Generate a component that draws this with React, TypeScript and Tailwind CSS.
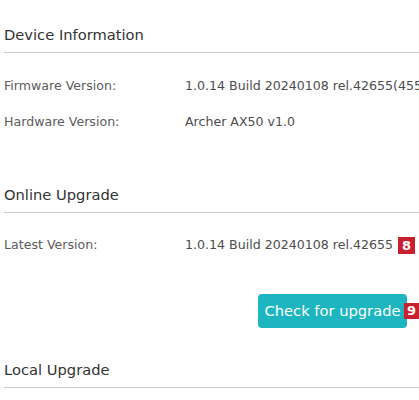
export default function App() {
  return (
    <div className="h-[400px] w-[419px] overflow-hidden bg-white pl-1 font-['DejaVu_Sans',Verdana,sans-serif] text-[#333]">
      <section className="pt-[26px]">
        <h2 className="text-[14.7px] leading-[18px]">Device Information</h2>
        <div className="mt-[8px] h-px bg-[#ccc]" />
        <div className="mt-[24px] space-y-[18px] text-[12.6px] leading-[18px]">
          <div className="flex">
            <span className="w-[181px] shrink-0 text-[#5c5c5c]">Firmware Version:</span>
            <span className="whitespace-nowrap text-[#4d4d4d]">1.0.14 Build 20240108 rel.42655(4555)</span>
          </div>
          <div className="flex">
            <span className="w-[181px] shrink-0 text-[#5c5c5c]">Hardware Version:</span>
            <span className="whitespace-nowrap text-[#4d4d4d]">Archer AX50 v1.0</span>
          </div>
        </div>
      </section>

      <section className="pt-[55px]">
        <h2 className="text-[14.7px] leading-[18px]">Online Upgrade</h2>
        <div className="mt-[8px] h-px bg-[#ccc]" />
        <div className="mt-[23px] flex text-[12.6px] leading-[18px]">
          <span className="w-[181px] shrink-0 text-[#5c5c5c]">Latest Version:</span>
          <span className="flex items-center whitespace-nowrap text-[#4d4d4d]">
            1.0.14 Build 20240108 rel.42655
            <span className="ml-[5px] bg-[#c8202e] px-[4px] text-[13px] font-bold leading-[17px] text-white">8</span>
          </span>
        </div>
        <div className="mt-[40px] flex justify-end">
          <div className="relative mr-[12px]">
            <button className="h-[34px] w-[149px] rounded-[4px] bg-[#1db5c0] text-[14.7px] text-white">
              Check for upgrade
            </button>
            <span className="absolute right-[-12px] top-[9px] bg-[#c8202e] px-[3px] text-[13px] font-bold leading-[16px] text-white">9</span>
          </div>
        </div>
      </section>

      <section className="pt-[33px]">
        <h2 className="text-[14.7px] leading-[18px]">Local Upgrade</h2>
        <div className="mt-[8px] h-px bg-[#ccc]" />
      </section>
    </div>
  );
}
